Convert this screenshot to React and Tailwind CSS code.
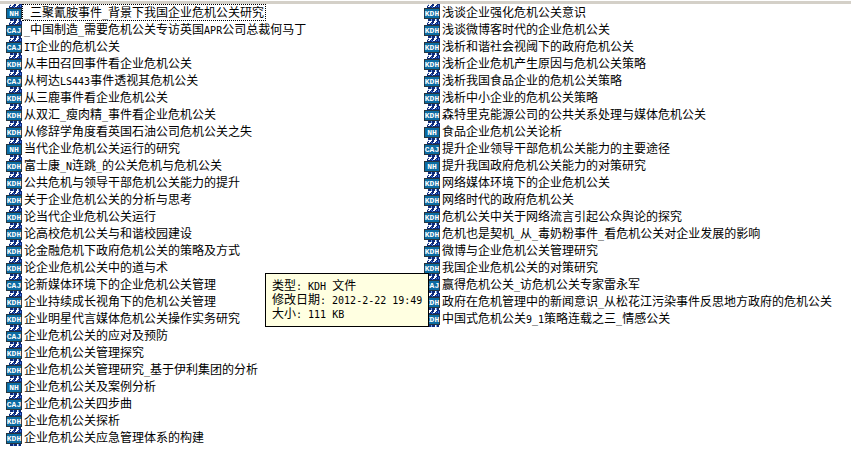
import React, { useState } from 'react';

const LEFT_FILES = [
  { type: 'NH', name: '_三聚氰胺事件_背景下我国企业危机公关研究' },
  { type: 'CAJ', name: '_中国制造_需要危机公关专访英国APR公司总裁何马丁' },
  { type: 'CAJ', name: 'IT企业的危机公关' },
  { type: 'KDH', name: '从丰田召回事件看企业危机公关' },
  { type: 'CAJ', name: '从柯达LS443事件透视其危机公关' },
  { type: 'KDH', name: '从三鹿事件看企业危机公关' },
  { type: 'KDH', name: '从双汇_瘦肉精_事件看企业危机公关' },
  { type: 'KDH', name: '从修辞学角度看英国石油公司危机公关之失' },
  { type: 'NH', name: '当代企业危机公关运行的研究' },
  { type: 'KDH', name: '富士康_N连跳_的公关危机与危机公关' },
  { type: 'KDH', name: '公共危机与领导干部危机公关能力的提升' },
  { type: 'KDH', name: '关于企业危机公关的分析与思考' },
  { type: 'KDH', name: '论当代企业危机公关运行' },
  { type: 'KDH', name: '论高校危机公关与和谐校园建设' },
  { type: 'KDH', name: '论金融危机下政府危机公关的策略及方式' },
  { type: 'KDH', name: '论企业危机公关中的道与术' },
  { type: 'CAJ', name: '论新媒体环境下的企业危机公关管理' },
  { type: 'KDH', name: '企业持续成长视角下的危机公关管理' },
  { type: 'KDH', name: '企业明星代言媒体危机公关操作实务研究' },
  { type: 'CAJ', name: '企业危机公关的应对及预防' },
  { type: 'KDH', name: '企业危机公关管理探究' },
  { type: 'KDH', name: '企业危机公关管理研究_基于伊利集团的分析' },
  { type: 'NH', name: '企业危机公关及案例分析' },
  { type: 'CAJ', name: '企业危机公关四步曲' },
  { type: 'KDH', name: '企业危机公关探析' },
  { type: 'KDH', name: '企业危机公关应急管理体系的构建' },
];

const RIGHT_FILES = [
  { type: 'KDH', name: '浅谈企业强化危机公关意识' },
  { type: 'KDH', name: '浅谈微博客时代的企业危机公关' },
  { type: 'KDH', name: '浅析和谐社会视阈下的政府危机公关' },
  { type: 'KDH', name: '浅析企业危机产生原因与危机公关策略' },
  { type: 'KDH', name: '浅析我国食品企业的危机公关策略' },
  { type: 'KDH', name: '浅析中小企业的危机公关策略' },
  { type: 'KDH', name: '森特里克能源公司的公共关系处理与媒体危机公关' },
  { type: 'NH', name: '食品企业危机公关论析' },
  { type: 'CAJ', name: '提升企业领导干部危机公关能力的主要途径' },
  { type: 'NH', name: '提升我国政府危机公关能力的对策研究' },
  { type: 'KDH', name: '网络媒体环境下的企业危机公关' },
  { type: 'KDH', name: '网络时代的政府危机公关' },
  { type: 'KDH', name: '危机公关中关于网络流言引起公众舆论的探究' },
  { type: 'KDH', name: '危机也是契机_从_毒奶粉事件_看危机公关对企业发展的影响' },
  { type: 'KDH', name: '微博与企业危机公关管理研究' },
  { type: 'KDH', name: '我国企业危机公关的对策研究' },
  { type: 'CAJ', name: '赢得危机公关_访危机公关专家雷永军' },
  { type: 'KDH', name: '政府在危机管理中的新闻意识_从松花江污染事件反思地方政府的危机公关' },
  { type: 'KDH', name: '中国式危机公关9_1策略连载之三_情感公关' },
];

// Latin runs are set in a mono face so that they take half the width of a Chinese character
function MixedText({ text }) {
  return (
    <span>
      {text.split(/([\x20-\x7e]+)/).filter(Boolean).map((part, i) =>
        /^[\x20-\x7e]/.test(part) ? (
          <span key={i} className="font-['DejaVu_Sans_Mono',monospace] text-[10px] leading-none">{part}</span>
        ) : (
          part
        )
      )}
    </span>
  );
}

function FileIcon({ type }) {
  return (
    <svg viewBox="0 0 16 17" className="h-[17px] w-4 shrink-0" aria-hidden="true" shapeRendering="crispEdges">
      {/* clapper behind the plate */}
      <path d="M4 0h12v4H3V1h1z" fill="#0e2a78" />
      <path d="M5 0h3v1H7v1H6v1H4V2h1zM10 0h3v1h-1v1h-1v1H9V2h1z" fill="#fff" />
      <path d="M3 1h1v1H3zM4 0h1v1H4z" fill="#c9d8f0" />
      <path d="M7 2h1v1H7zM12 2h1v1h-1zM14 1h1v2h-1zM8 3h1v1H8z" fill="#3f78e0" />
      <path d="M4 15h3v2H4zM8 15h3v2H8zM13 15h2v2h-2z" fill="#0e2a78" />
      <path d="M7 15h1v2H7zM12 15h1v2h-1z" fill="#6fa0ea" />
      {/* plate with the file type */}
      <rect x="0" y="4" width="16" height="11" fill="#26363f" />
      <rect x="1" y="5" width="14" height="9" fill="#0b6ca3" />
      <text
        x="8"
        y="12"
        textAnchor="middle"
        fill="#fff"
        className="font-['Liberation_Mono',monospace] text-[8px] font-bold"
      >
        {type}
      </text>
    </svg>
  );
}

function FileColumn({ files, selected, onSelect }) {
  return (
    <ul>
      {files.map((file) => (
        <li key={file.name} className="h-[17px]">
          <button
            type="button"
            onClick={() => onSelect(file.name)}
            className="flex items-center whitespace-nowrap focus:outline-none"
          >
            <FileIcon type={file.type} />
            <span
              className={`flex h-[17px] items-center border border-dotted px-px pb-0.5 leading-[14px] ${
                selected === file.name ? 'border-black' : 'border-transparent'
              }`}
            >
              <MixedText text={file.name} />
            </span>
          </button>
        </li>
      ))}
    </ul>
  );
}

function FileTooltip({ lines }) {
  return (
    <div
      role="tooltip"
      className="absolute left-[265px] top-[273px] border border-black bg-[#ffffe1] px-1.5 pt-1 pb-1.5 leading-[14px] whitespace-nowrap"
    >
      {lines.map((line) => (
        <p key={line} className="h-[14px] whitespace-pre">
          <MixedText text={line} />
        </p>
      ))}
    </div>
  );
}

export default function App() {
  const [selected, setSelected] = useState(LEFT_FILES[0].name);

  return (
    <main className="relative min-h-screen overflow-hidden bg-white pt-px font-['Noto_Sans_CJK_SC',sans-serif] text-[12px] leading-4 text-black">
      <div className="h-[3px] bg-[#d4d0c8]" />
      <div className="grid grid-cols-[418px_1fr] pl-1.5">
        <FileColumn files={LEFT_FILES} selected={selected} onSelect={setSelected} />
        <FileColumn files={RIGHT_FILES} selected={selected} onSelect={setSelected} />
      </div>
      <FileTooltip lines={['类型: KDH 文件', '修改日期: 2012-2-22 19:49', '大小: 111 KB']} />
    </main>
  );
}
